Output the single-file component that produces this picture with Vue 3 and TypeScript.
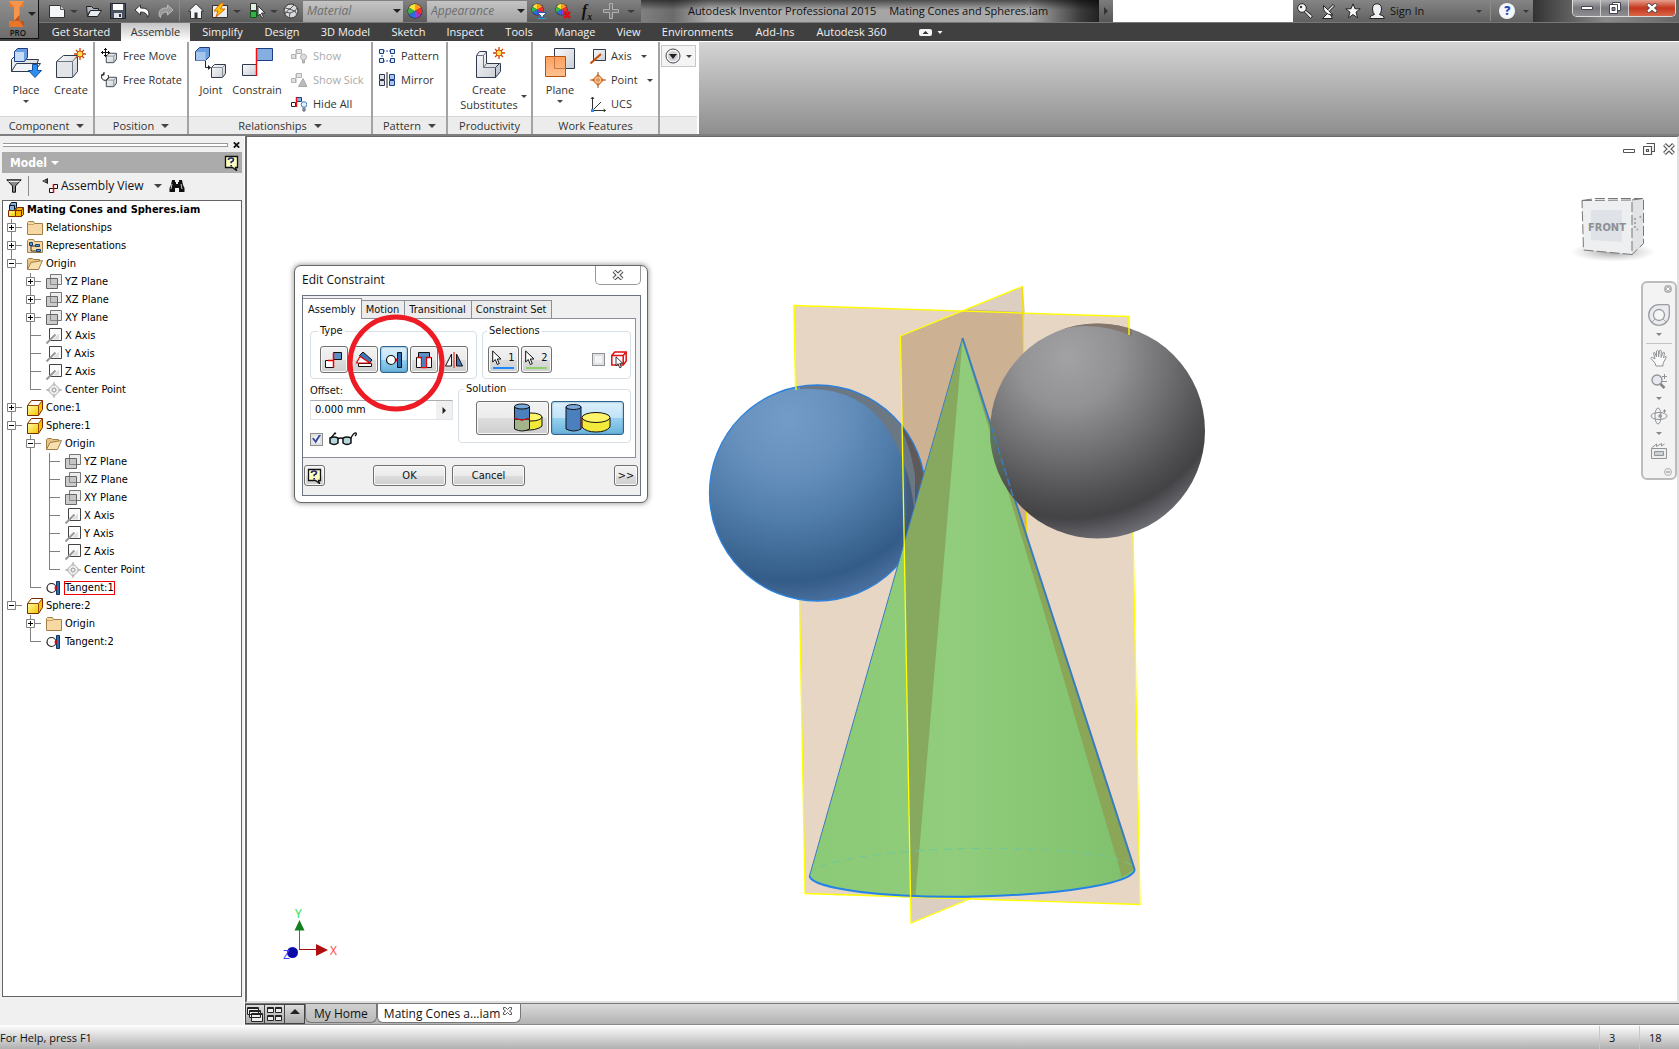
<script setup lang="ts">
import { ref } from 'vue'

type Guide = 'none' | 'line' | 'tee' | 'end'
type Box = 'plus' | 'minus' | ''

interface TreeRow {
  label: string
  icon: string
  guides: Guide[]
  box?: Box
  root?: boolean
  flagged?: boolean
}

interface RibbonTab {
  label: string
  active?: boolean
}

const ribbonTabs: RibbonTab[] = [
  { label: 'Get Started' },
  { label: 'Assemble', active: true },
  { label: 'Simplify' },
  { label: 'Design' },
  { label: '3D Model' },
  { label: 'Sketch' },
  { label: 'Inspect' },
  { label: 'Tools' },
  { label: 'Manage' },
  { label: 'View' },
  { label: 'Environments' },
  { label: 'Add-Ins' },
  { label: 'Autodesk 360' },
]

function originChildren(prefix: Guide[], planeBox: Box): TreeRow[] {
  const tee: Guide[] = [...prefix, 'tee']
  return [
    { label: 'YZ Plane', icon: 't-plane', guides: tee, box: planeBox },
    { label: 'XZ Plane', icon: 't-plane', guides: tee, box: planeBox },
    { label: 'XY Plane', icon: 't-plane', guides: tee, box: planeBox },
    { label: 'X Axis', icon: 't-axis', guides: tee },
    { label: 'Y Axis', icon: 't-axis', guides: tee },
    { label: 'Z Axis', icon: 't-axis', guides: tee },
    { label: 'Center Point', icon: 't-point', guides: [...prefix, 'end'] },
  ]
}

const treeRows: TreeRow[] = [
  { label: 'Mating Cones and Spheres.iam', icon: 't-assembly', guides: [], root: true },
  { label: 'Relationships', icon: 't-folder', guides: ['tee'], box: 'plus' },
  { label: 'Representations', icon: 't-reps', guides: ['tee'], box: 'plus' },
  { label: 'Origin', icon: 't-open', guides: ['tee'], box: 'minus' },
  ...originChildren(['line'], 'plus'),
  { label: 'Cone:1', icon: 't-part', guides: ['tee'], box: 'plus' },
  { label: 'Sphere:1', icon: 't-part', guides: ['tee'], box: 'minus' },
  { label: 'Origin', icon: 't-open', guides: ['line', 'tee'], box: 'minus' },
  ...originChildren(['line', 'line'], ''),
  { label: 'Tangent:1', icon: 't-tangent', guides: ['line', 'end'], flagged: true },
  { label: 'Sphere:2', icon: 't-part', guides: ['end'], box: 'minus' },
  { label: 'Origin', icon: 't-folder', guides: ['none', 'tee'], box: 'plus' },
  { label: 'Tangent:2', icon: 't-tangent', guides: ['none', 'end'] },
]

const constraintTypes = [
  { name: 'Mate', icon: 'd-mate' },
  { name: 'Angle', icon: 'd-angle' },
  { name: 'Tangent', icon: 'd-tangent' },
  { name: 'Insert', icon: 'd-insert' },
  { name: 'Symmetry', icon: 'd-sym' },
]
const activeType = ref('Tangent')
const dialogTabs = ['Assembly', 'Motion', 'Transitional', 'Constraint Set']
const activeDialogTab = ref('Assembly')
const offset = ref('0.000 mm')
const showPreview = ref(true)
const pickPartFirst = ref(false)
const solution = ref('outside')
const searchText = ref('')
</script>

<template>
  <div class="app">
    <svg class="sprite" aria-hidden="true">
      <defs>
        <linearGradient id="g-pale" x1="0" y1="0" x2="1" y2="1">
          <stop offset="0" stop-color="#fafafa" /><stop offset="1" stop-color="#c9cdd4" />
        </linearGradient>
        <linearGradient id="g-orange" x1="0" y1="0" x2="0" y2="1">
          <stop offset="0" stop-color="#ff9a55" /><stop offset="1" stop-color="#ffc08a" />
        </linearGradient>
        <linearGradient id="g-yellow" x1="0" y1="0" x2="1" y2="1">
          <stop offset="0" stop-color="#fff9a0" /><stop offset="1" stop-color="#f5c800" />
        </linearGradient>

        <symbol id="t-folder" viewBox="0 0 16 16">
          <path d="M.5 14.500V2.500l1-1h5l1 2h8v11z" fill="#f6d9a2" stroke="#a08048" />
          <path d="M1 4.500h6" stroke="#c9a265" />
        </symbol>
        <symbol id="t-reps" viewBox="0 0 16 16">
          <path d="M.5 14.500V2.500l1-1h5l1 2h8v11z" fill="#f6d9a2" stroke="#a08048" />
          <path d="M4 6v7h6M4 8h5" fill="none" stroke="#333" />
          <path d="M2.500 4.500h3v3h-3zM8.500 6.500h4v2h-4zM9.500 11.500h4v2h-4z" fill="#5b9be0" stroke="#1c3d6a" />
        </symbol>
        <symbol id="t-open" viewBox="0 0 16 16">
          <path d="M.5 13.500V3.500l1-1h4l1 1h6v3" fill="#e8c486" stroke="#a08048" />
          <path d="M.5 13.500L4 6.500l11.500-2-4 9z" fill="#f8dfae" stroke="#a08048" />
        </symbol>
        <symbol id="t-plane" viewBox="0 0 16 16">
          <path d="M4.500.5h11v10h-11z" fill="#ededed" stroke="#777" />
          <path d="M.5 4.500h11v10H.5z" fill="#b5b5b5" fill-opacity=".7" stroke="#666" />
          <path d="M4.500 5v5.500H11" fill="none" stroke="#888" />
        </symbol>
        <symbol id="t-axis" viewBox="0 0 16 16">
          <path d="M3.500.5h12v12h-12z" fill="#fbfbfb" stroke="#444" />
          <path d="M13 11.500H7l6-6z" fill="#dedede" />
          <path d="M.5 15.500l9-9" stroke="#999" stroke-width="2" />
        </symbol>
        <symbol id="t-point" viewBox="0 0 16 16">
          <path d="M8 1.500L14.500 8 8 14.500 1.500 8z" fill="#eee" stroke="#aaa" />
          <path d="M8 0v4M8 12v4M0 8h4M12 8h4" stroke="#aaa" />
          <circle cx="8" cy="8" r="2" fill="none" stroke="#999" />
        </symbol>
        <symbol id="t-part" viewBox="0 0 16 16">
          <path d="M.5 5.500l4-5h11v9l-4 6H.500z" fill="#f5c400" stroke="#7a2a00" stroke-linejoin="round" />
          <path d="M1.200 5.500L5 1h9.800l-3.500 4.500z" fill="#fff" />
          <path d="M1 6h10v9H1z" fill="url(#g-yellow)" />
          <path d="M.5 5.500h11v10m0-10l4-5" fill="none" stroke="#9a4a00" />
        </symbol>
        <symbol id="t-assembly" viewBox="0 0 16 16">
          <path d="M1.500 3.500l2-3h5v5l-2 3h-5z" fill="#7db2e8" stroke="#111" />
          <path d="M1.500 3.500h5v4" fill="none" stroke="#111" />
          <path d="M.5 8.500h7v6h-7z" fill="url(#g-yellow)" stroke="#7a2a00" />
          <path d="M7.500 8.500l2-3h6v7l-2 2h-6z" fill="#f5b400" stroke="#7a2a00" />
          <path d="M7.500 8.500h6v6m0-6l2-3" fill="none" stroke="#7a2a00" />
        </symbol>
        <symbol id="t-tangent" viewBox="0 0 16 16">
          <circle cx="5.500" cy="8" r="4.500" fill="#fff" stroke="#222" stroke-width="1.200" />
          <path d="M10.500 1.500h3v13h-3z" fill="#2f6faf" stroke="#12345c" />
          <path d="M8.500 8h2M10 6v4" stroke="#e00" stroke-width="1.500" />
        </symbol>

        <symbol id="r-cube" viewBox="0 0 16 16">
          <path d="M3.500 6.500l3-3h8v6l-3 4h-8z" fill="url(#g-pale)" stroke="#3a4250" />
          <path d="M3.500 6.500h8v7m0-7l3-3" fill="none" stroke="#8a909a" />
        </symbol>
        <symbol id="d-mate" viewBox="0 0 18 18">
          <path d="M8.500 1.500h8v7h-8z" fill="#5b8fc6" stroke="#111" />
          <path d="M.5 9.500h8v7h-8z" fill="#fff" stroke="#111" />
          <path d="M8.500 2v15M8 9.500H3" stroke="#e00" stroke-width="1.500" />
        </symbol>
        <symbol id="d-angle" viewBox="0 0 18 18">
          <path d="M4.500 4.500L8 1l9 8-3 3.500z" fill="#3f76b5" stroke="#111" />
          <path d="M3.500 12.500h13v3h-13z" fill="#fff" stroke="#111" />
          <path d="M5 5.500L1.500 12H15z" fill="#fff" stroke="#e00" stroke-width="1.200" />
        </symbol>
        <symbol id="d-tangent" viewBox="0 0 18 18">
          <circle cx="6" cy="9" r="4.500" fill="#fff" stroke="#111" stroke-width="1.200" />
          <path d="M12.500 1.500h4v15h-4z" fill="#2f6faf" stroke="#111" />
          <path d="M10 9l2.500-2.500v5z" fill="#e00" />
        </symbol>
        <symbol id="d-insert" viewBox="0 0 18 18">
          <path d="M1.500 6.500h15v10h-15z" fill="#fff" stroke="#111" />
          <path d="M6.500 7v9.500h5V7" fill="#3f76b5" stroke="#e00" stroke-width="1.300" />
          <path d="M3.500 1.500h11v5h-11z" fill="#5b8fc6" stroke="#111" />
          <path d="M7 5h4v11H7z" fill="#4a80bd" />
          <path d="M2 6.500h4.500M11.500 6.500H16" stroke="#e00" stroke-width="1.300" />
        </symbol>
        <symbol id="d-sym" viewBox="0 0 18 18">
          <path d="M6.500 3v12h-6z" fill="#fff" stroke="#111" />
          <path d="M11.500 3v12h6z" fill="#3f76b5" stroke="#111" />
          <path d="M9 1v16" stroke="#e00" />
        </symbol>
        <symbol id="cursor" viewBox="0 0 10 16">
          <path d="M.7 1v11l2.600-2.500 2 5 2-.9-2-4.600H9z" fill="#fff" stroke="#111" />
        </symbol>
        <symbol id="help-note" viewBox="0 0 16 16">
          <path d="M1.500 1.500h12v11h-2l1 3-4-3h-7z" fill="#ffffc0" stroke="#111" stroke-width="1.300" />
          <path d="M4.500 5q0-2 2.500-2t2.500 1.800Q9.500 6.200 7.200 7v1.200M7.200 10v1.500" fill="none" stroke="#1b2a6b" stroke-width="1.700" />
        </symbol>
        <symbol id="wheel" viewBox="0 0 16 16">
          <circle cx="8" cy="8" r="7.500" fill="#223" />
          <path d="M8 8V1a7 7 0 0 1 6.060 3.500z" fill="#ff9a1f" />
          <path d="M8 8l6.060-3.500a7 7 0 0 1 0 7z" fill="#e8342c" />
          <path d="M8 8l6.060 3.500A7 7 0 0 1 8 15z" fill="#a03ad0" />
          <path d="M8 8v7a7 7 0 0 1-6.060-3.500z" fill="#2f6ae0" />
          <path d="M8 8l-6.060 3.500a7 7 0 0 1 0-7z" fill="#35b648" />
          <path d="M8 8L1.940 4.500A7 7 0 0 1 8 1z" fill="#f8e43a" />
        </symbol>
        <symbol id="spark" viewBox="0 0 12 12">
          <path d="M6 0v12M0 6h12M2 2l8 8M10 2l-8 8" stroke="#d4440c" stroke-width="1.300" />
          <circle cx="6" cy="6" r="3" fill="#ffe14a" stroke="#d4440c" />
        </symbol>
      </defs>
    </svg>

    <header class="chrome">
      <button class="app-button" aria-label="Application menu">
        <svg width="18" height="26" viewBox="0 0 18 26">
          <path d="M1 0h15v6h-4.500v14H16v6H1v-6h5V6H1z" fill="#e8772a" />
          <path d="M1 0h15l-4.500 6H6zM6 6v14l5.500-6V6z" fill="#f7964a" />
          <path d="M1 26l5-6 5.500-6v6H16v6z" fill="#c2561a" />
          <path d="M1 26h15l-4.500-6H6z" fill="#e8772a" />
        </svg>
        <i class="caret wide"></i>
        <span>PRO</span>
      </button>

      <div class="chrome-main">
        <div class="title-row">
          <div class="qat">
            <button class="q" aria-label="New"><svg viewBox="0 0 16 16"><path d="M.5 2.500h11l4 4v8H.500z" fill="#f4f5f7" stroke="#333" /><path d="M11.500 2.500v4h4" fill="#ccd" stroke="#555" /></svg></button>
            <i class="caret dark"></i>
            <button class="q" aria-label="Open"><svg viewBox="0 0 16 16"><path d="M.5 3.500h5l2 2h5v2l-9 1-2 5z" fill="#aeb6c2" stroke="#222" /><path d="M1.500 13.500l3-6h11l-4 6z" fill="#e8ebf0" stroke="#222" /></svg></button>
            <button class="q" aria-label="Save"><svg viewBox="0 0 16 16"><path d="M.5.5h15v15H.500z" fill="#4a5262" stroke="#1c222c" /><path d="M3 1h10v6H3z" fill="#fff" /><path d="M4 10h8v5H4z" fill="#dfe3ea" /><path d="M9 11h2v3H9z" fill="#333" /></svg></button>
            <button class="q" aria-label="Undo"><svg viewBox="0 0 16 16"><path d="M1 7l5.500-5v3Q15 4.500 15 11q0 2-1.500 3.500Q13.500 9 6.500 9v3z" fill="#fff" stroke="#333" /></svg></button>
            <button class="q" aria-label="Redo"><svg viewBox="0 0 16 16"><path d="M15 7L9.500 2v3Q1 4.500 1 11q0 2 1.500 3.500Q2.500 9 9.500 9v3z" fill="#999" stroke="#bbb" /></svg></button>
            <i class="bar"></i>
            <button class="q" aria-label="Home"><svg viewBox="0 0 16 16"><path d="M.5 8L8 .8 15.500 8h-2v7.500h-11V8z" fill="#f4f5f7" stroke="#333" /><path d="M6.500 15.500v-6h3v6z" fill="#333" /></svg></button>
            <button class="q" aria-label="Update"><svg viewBox="0 0 16 16"><path d="M.5 2.500h15v12H.500z" fill="#e8ebf0" stroke="#333" /><path d="M9 0L2 8h4l-2 6 9-8H8.500L12 0z" fill="#ffc400" stroke="#d86a00" /></svg></button>
            <i class="caret dark"></i>
            <button class="q" aria-label="Select"><svg viewBox="0 0 16 16"><path d="M1.500.5h6v7h-6z" fill="#e0f0e0" stroke="#333" /><path d="M1.500 8.500h6v6h-6z" fill="#38b048" stroke="#0e5a1a" /><path d="M9 3v10l2-2 2 4 1.500-1-2-4H16z" fill="#fff" stroke="#333" /></svg></button>
            <i class="caret dark"></i>
            <button class="q ball" aria-label="Material browser"><svg viewBox="0 0 16 16"><circle cx="8" cy="8" r="7" fill="#d8dade" stroke="#333" /><path d="M2 5l5 1 4-4M2 11l4-5 6 2 2-3M6 15l1-5 5-2 2 4M7 10l-5-1" fill="none" stroke="#555" /></svg></button>
            <span class="combo">
              <select aria-label="Material"><option>Material</option></select><i class="caret"></i>
            </span>
            <button class="q" aria-label="Appearance browser"><svg viewBox="0 0 16 16"><use href="#wheel" /></svg></button>
            <span class="combo">
              <select aria-label="Appearance"><option>Appearance</option></select><i class="caret"></i>
            </span>
            <button class="q" aria-label="Adjust"><svg viewBox="0 0 16 16"><use href="#wheel" width="13" height="13" /><path d="M6.500 9.500h9L12 13v1.500h-2V13z" fill="#fff" stroke="#1b5fb0" /><path d="M7 15.500h8" stroke="#1b9be0" /></svg></button>
            <button class="q" aria-label="Clear"><svg viewBox="0 0 16 16"><use href="#wheel" width="13" height="13" /><path d="M9 9l6 6M15 9l-6 6" stroke="#e01010" stroke-width="2.500" /></svg></button>
            <button class="q fx" aria-label="Parameters"><i>f<sub>x</sub></i></button>
            <button class="q" aria-label="Add"><svg viewBox="0 0 16 16"><path d="M6.500.5h3v6h6v3h-6v6h-3v-6h-6v-3h6z" fill="#7a7a7a" stroke="#b0b0b0" /></svg></button>
            <i class="caret dark last-caret"></i>
          </div>

          <div class="window-title">
            <span>Autodesk Inventor Professional 2015</span>
            <span>Mating Cones and Spheres.iam</span>
          </div>

          <div class="search">
            <button aria-label="Search options"><svg width="6" height="8" viewBox="0 0 6 8"><path d="M1 0l4 4-4 4z" fill="#333" /></svg></button>
            <input v-model="searchText" aria-label="Search" />
          </div>

          <div class="info">
            <button class="q" aria-label="Search help"><svg viewBox="0 0 16 16"><path d="M9 7.500l6.500 5.500-2 2.500-6-6.500" fill="#e8eaee" stroke="#222" /><circle cx="5" cy="5" r="4.300" fill="#f6f7f9" stroke="#222" /><circle cx="4" cy="4" r="1.200" fill="#333" /></svg></button>
            <button class="q" aria-label="Subscription"><svg viewBox="0 0 16 16"><path d="M7 10l-5.500 5.500h10L9 11" fill="#f6f7f9" stroke="#222" /><path d="M2.500 2.500q-1 9 9.500 9.500z" fill="#f6f7f9" stroke="#222" /><path d="M8 7l5-5" stroke="#222" stroke-width="3" /><path d="M7.500 7.500l5-5" stroke="#eee" stroke-width="1.300" /></svg></button>
            <button class="q" aria-label="Favorites"><svg viewBox="0 0 16 16"><path d="M8 .8l2 5h5.200l-4.200 3.400 1.600 5.600L8 11.600l-4.600 3.200L5 9.200.8 5.800H6z" fill="#f6f7f9" stroke="#222" /></svg></button>
            <button class="q" aria-label="Account"><svg viewBox="0 0 16 16"><path d="M.5 15.500q0-3 5-4-2-2-2-5.500Q3.500.8 8 .8T12.500 6q0 3.500-2 5.500 5 1 5 4z" fill="#f0f1f4" stroke="#222" /></svg></button>
            <button class="sign-in">Sign In</button>
            <i class="caret dark"></i>
            <i class="bar"></i>
            <button class="help-round" aria-label="Help">?</button>
            <i class="caret dark"></i>
          </div>

          <div class="glass">
            <div class="win-buttons">
              <button aria-label="Minimize"><svg width="12" height="4" viewBox="0 0 12 4"><path d="M.5.5h11v3H.500z" fill="#fff" stroke="#445" /></svg></button>
              <button aria-label="Restore"><svg width="12" height="12" viewBox="0 0 12 12"><path d="M3.500.5h8v8h-8z" fill="#fff" stroke="#445" /><path d="M.5 2.500h8v9h-8z" fill="#fff" stroke="#445" /><path d="M3 5.500h3v3H3z" fill="#889" stroke="#445" /></svg></button>
              <button class="close" aria-label="Close"><svg width="12" height="10" viewBox="0 0 12 10"><path d="M1.500 1l9 8M10.500 1l-9 8" stroke="#445" stroke-width="4" /><path d="M2 1.500l8 7M10 1.500l-8 7" stroke="#fff" stroke-width="2.400" /></svg></button>
            </div>
          </div>
        </div>

        <nav class="menu" aria-label="Ribbon tabs">
          <button v-for="tab in ribbonTabs" :key="tab.label" :class="{ active: tab.active }">{{ tab.label }}</button>
          <button class="fold" aria-label="Minimize ribbon"><svg width="24" height="7" viewBox="0 0 24 7"><rect width="13" height="7" rx="2" fill="#f4f4f4" /><path d="M3.500 5l3-3 3 3z" fill="#333" /><path d="M18.500 2h5L21 5z" fill="#f4f4f4" /></svg></button>
        </nav>
      </div>
    </header>

    <section class="ribbon">
      <div class="panel component">
        <div class="panel-body">
          <button class="big">
            <svg viewBox="0 0 32 32"><path d="M1.500 12.500l4-4h9l2 4h12l-4 12h-23z" fill="url(#g-pale)" stroke="#2f3a4c" /><path d="M1.500 24.500l5-8h24l-6 8z" fill="#f2f3f6" stroke="#2f3a4c" /><path d="M4.500 4.500l3-3h10v9l-3 4h-10z" fill="#6d9fe0" stroke="#1c3f86" /><path d="M5 5h9v9H5z" fill="#c4dcf6" /><path d="M22.500 17.500h5v6h4l-6.500 7-6.500-7h4z" fill="#2e8df0" stroke="#1450a0" /></svg>
            <span>Place</span><i class="caret"></i>
          </button>
          <button class="big">
            <svg viewBox="0 0 32 32"><path d="M1.500 14.500l7-6h14v16l-5 6h-16z" fill="url(#g-pale)" stroke="#2f3a4c" /><path d="M2 15h15.500v15H2z" fill="#e2e4e8" /><path d="M1.500 14.500h16v16m0-16l5-6" fill="none" stroke="#6b7484" /><use href="#spark" x="19" y="1" width="12" height="12" /></svg>
            <span>Create</span>
          </button>
        </div>
        <footer>Component <i class="caret wide"></i></footer>
      </div>

      <div class="panel position">
        <div class="panel-body">
          <div class="stack">
            <button><svg viewBox="0 0 16 16"><use href="#r-cube" x="2" y="2" width="15" height="15" /><path d="M4.500 0v9M0 4.500h9M3 1.500h3M3 7.500h3M1.500 3v3M7.500 3v3" stroke="#111" /></svg>Free Move</button>
            <button><svg viewBox="0 0 16 16"><use href="#r-cube" x="2" y="2" width="15" height="15" /><path d="M3 1.500A3.500 3.500 0 1 0 7 3M3 0v3h-3" fill="none" stroke="#111" /></svg>Free Rotate</button>
          </div>
        </div>
        <footer>Position <i class="caret wide"></i></footer>
      </div>

      <div class="panel relations">
        <div class="panel-body">
          <button class="big">
            <svg viewBox="0 0 32 32"><path d="M.5 4.500l4-4h10v9l-4 4H.500z" fill="#6d9fe0" stroke="#1c3f86" /><path d="M1 5h9.500v8.500H1z" fill="#a6c6ee" /><path d="M16.500 20.500l3-3h11v9l-3 4h-11z" fill="url(#g-pale)" stroke="#2f3a4c" /><path d="M16.500 20.500h11v10m0-10l3-3" fill="none" stroke="#8a909a" /><path d="M10.500 14v6.500h5" fill="none" stroke="#222" /><path d="M13 18l3 2.500-3 2.500z" fill="#222" /></svg>
            <span>Joint</span>
          </button>
          <button class="big wide">
            <svg viewBox="0 0 32 32"><path d="M15.500 1.500h16v12h-16z" fill="#84aee0" stroke="#1c3f86" /><path d="M1.500 17.500h14v11h-14z" fill="url(#g-pale)" stroke="#2f3a4c" /><path d="M15.500 1v28" stroke="#f01010" stroke-width="1.500" /></svg>
            <span>Constrain</span>
          </button>
          <div class="stack">
            <button class="off"><svg viewBox="0 0 16 16"><path d="M5.500 1.500h5v4h-5zM.500 6.500h4v4h-4zM5 2v9" fill="#e2e2e2" stroke="#b2b2b2" /><circle cx="12.500" cy="9" r="3" fill="#ddd" stroke="#b2b2b2" /><path d="M11.500 12v3h2v-3" fill="#bbb" stroke="#aaa" /></svg>Show</button>
            <button class="off"><svg viewBox="0 0 16 16"><path d="M5.500 1.500h5v4h-5zM.500 6.500h4v4h-4zM5 2v9" fill="#e2e2e2" stroke="#b2b2b2" /><path d="M12 6.500l4 8H7.500z" fill="#bbb" stroke="#aaa" /></svg>Show Sick</button>
            <button><svg viewBox="0 0 16 16"><path d="M5.500 1.500h5v4h-5z" fill="#84aee0" stroke="#1c3f86" /><path d="M.5 6.500h4v4h-4z" fill="#fff" stroke="#222" /><path d="M5.500 1v10" stroke="#f01010" stroke-width="1.500" /><circle cx="13" cy="8.500" r="2.800" fill="#dff0ff" stroke="#3a7ac0" /><path d="M12 11.500v3.500h2v-3.500" fill="#9ab" stroke="#567" /></svg>Hide All</button>
          </div>
        </div>
        <footer>Relationships <i class="caret wide"></i></footer>
      </div>

      <div class="panel pattern">
        <div class="panel-body">
          <div class="stack">
            <button><svg viewBox="0 0 16 16"><path d="M4 3h8M4 13h8M3 4v8M13 4v8" stroke="#2a57a5" stroke-dasharray="2 1" /><path d="M.5 1.500h4v4h-4zM11.500 1.500h4v4h-4zM.500 10.500h4v4h-4zM11.500 10.500h4v4h-4z" fill="#dce9f8" stroke="#1c3f86" /></svg>Pattern</button>
            <button><svg viewBox="0 0 16 16"><path d="M.5 2.500h5v5h-5zM.500 8.500h5v5h-5z" fill="#dfe2e8" stroke="#2f3a4c" /><path d="M10.500 2.500h5v5h-5zM10.500 8.500h5v5h-5z" fill="#a6c6ee" stroke="#1c3f86" /><path d="M8 0v16" stroke="#222" /></svg>Mirror</button>
          </div>
        </div>
        <footer>Pattern <i class="caret wide"></i></footer>
      </div>

      <div class="panel productivity">
        <div class="panel-body">
          <button class="big two">
            <svg viewBox="0 0 32 32"><path d="M3.500 8.500l3-4h7v12h13l-4 4v10h-19z" fill="url(#g-pale)" stroke="#2f3a4c" /><path d="M22.500 30.500l5-6v-8h-1l-4 4z" fill="#c4c8d0" stroke="#2f3a4c" /><path d="M3.500 8.500h7v12h12m-12 0l3-4m-3-8l3-4" fill="none" stroke="#6b7484" /><use href="#spark" x="20" y="0" width="12" height="12" /></svg>
            <span>Create<br />Substitutes</span><i class="caret"></i>
          </button>
        </div>
        <footer>Productivity</footer>
      </div>

      <div class="panel work">
        <div class="panel-body">
          <button class="big">
            <svg viewBox="0 0 32 32"><path d="M10.500 1.500h20v20h-20z" fill="url(#g-pale)" stroke="#2f3a4c" /><path d="M1.500 9.500h20v20h-20z" fill="url(#g-orange)" fill-opacity=".95" stroke="#b8500c" /><path d="M10.500 9.500v12h11" fill="none" stroke="#c07a4c" /></svg>
            <span>Plane</span><i class="caret"></i>
          </button>
          <div class="stack">
            <button><svg viewBox="0 0 16 16"><path d="M3.500 1.500h12v11h-12z" fill="url(#g-pale)" stroke="#2f3a4c" /><path d="M.5 15.500L11 6" stroke="#c0500c" stroke-width="2" /></svg>Axis<i class="caret"></i></button>
            <button><svg viewBox="0 0 16 16"><path d="M8 2.500L13.500 8 8 13.500 2.500 8z" fill="#ffc08a" stroke="#b8500c" /><path d="M8 0v5M8 11v5M0 8h5M11 8h5" stroke="#b8500c" /><path d="M8 6.500L9.500 8 8 9.500 6.500 8z" fill="#fff" stroke="#b8500c" /></svg>Point<i class="caret"></i></button>
            <button><svg viewBox="0 0 16 16"><path d="M2.500 14V1.500M2 14.500h13.500M1 3l1.500-2L4 3M13.500 13l2 1.500-2 1.500M3 14l8-8" fill="none" stroke="#333" /><path d="M1 13h3v3H1z" fill="#2e8df0" /></svg>UCS</button>
          </div>
        </div>
        <footer>Work Features</footer>
      </div>

      <div class="panel last">
        <div class="panel-body">
          <button class="drop" aria-label="Panels">
            <svg width="16" height="16" viewBox="0 0 16 16"><circle cx="8" cy="8" r="7" fill="#fff" stroke="#444" /><circle cx="8" cy="8" r="5.300" fill="#cfd3d8" /><path d="M4 6h8l-4 5z" fill="#222" /></svg>
            <i class="caret"></i>
          </button>
        </div>
        <footer></footer>
      </div>
    </section>

    <div class="workspace">
      <aside class="browser">
        <div class="grip"><i></i><button aria-label="Close panel"><svg width="7" height="6" viewBox="0 0 7 6"><path d="M.8.3l5.400 5.400M6.200.3L.8 5.700" stroke="#111" stroke-width="1.700" /></svg></button></div>
        <div class="browser-title">
          <strong>Model</strong><i class="caret wide"></i>
          <button aria-label="Browser help"><svg width="16" height="16"><use href="#help-note" /></svg></button>
        </div>
        <div class="browser-tools">
          <button aria-label="Filter"><svg width="16" height="14" viewBox="0 0 16 14"><path d="M.8.8h14.400L9.500 7v6.200h-3V7z" fill="#8a8a8a" stroke="#111" /><path d="M2.500 2.500h11" stroke="#eee" /></svg></button>
          <i class="bar"></i>
          <svg width="16" height="16" viewBox="0 0 16 16"><path d="M0 3l6-3v6z" fill="#222" /><path d="M2 3h3" stroke="#999" /><path d="M7.500 10.500h4v4h-4zM11.500 6.500h4v4h-4z" fill="#fff" stroke="#111" /><path d="M11.500 6v9" stroke="#e00" stroke-width="1.500" /></svg>
          <button class="view-pick">Assembly View</button><i class="caret wide"></i>
          <button aria-label="Find"><svg width="16" height="14" viewBox="0 0 16 14"><path d="M3 1h3v2h1v2h2V3h1V1h3l1 5 1.500 3v4H10V9H6v4H.500V9L2 6z" fill="#111" /><path d="M3 5L2 10M12 5l1 5" stroke="#ccc" /></svg></button>
        </div>
        <div class="tree" role="tree">
          <div v-for="(row, i) in treeRows" :key="i" class="row" :class="{ root: row.root }" role="treeitem">
            <svg v-for="(g, k) in row.guides" :key="k" class="guide" width="19" height="18" viewBox="0 0 19 18">
              <path v-if="g === 'line' || g === 'tee'" d="M8.500 0v18" stroke="#808080" />
              <path v-if="g === 'end'" d="M8.500 0v9" stroke="#808080" />
              <path v-if="g === 'tee' || g === 'end'" d="M8.500 8.500h11" stroke="#808080" />
              <g v-if="row.box && k === row.guides.length - 1">
                <path d="M4.500 4.500h8v8h-8z" fill="#fff" stroke="#808080" />
                <path :d="row.box === 'plus' ? 'M6 8.500h5M8.500 6v5' : 'M6 8.500h5'" stroke="#000" />
              </g>
            </svg>
            <svg class="node" width="16" height="16"><use :href="'#' + row.icon" /></svg>
            <span :class="{ flagged: row.flagged }">{{ row.label }}</span>
          </div>
        </div>
      </aside>

      <main class="stage">
        <div class="viewport">
          <div class="doc-buttons">
            <button aria-label="Minimize document"><svg width="12" height="12" viewBox="0 0 12 12"><path d="M.5 6.500h11v3H.500z" fill="#fff" stroke="#555" /></svg></button>
            <button aria-label="Restore document"><svg width="12" height="12" viewBox="0 0 12 12"><path d="M3.500.5h8v8h-3M.500 3.500h8v8h-8zM3.500 6.500h2v2h-2z" fill="none" stroke="#555" stroke-width="1.200" /></svg></button>
            <button aria-label="Close document"><svg width="12" height="12" viewBox="0 0 12 12"><path d="M1.500 1.500l9 9M10.500 1.500l-9 9" stroke="#555" stroke-width="4" /><path d="M1.800 1.800l8.400 8.400M10.200 1.800l-8.400 8.400" stroke="#fff" stroke-width="1.800" /></svg></button>
          </div>

          <svg class="scene" width="520" height="660" viewBox="700 275 520 660" role="img" aria-label="Cone with two tangent spheres">
            <defs>
              <radialGradient id="s-blue" cx=".36" cy=".12" r=".95" fx=".36" fy=".16">
                <stop offset="0" stop-color="#739cc8" /><stop offset=".25" stop-color="#6891be" />
                <stop offset=".5" stop-color="#527eac" /><stop offset=".72" stop-color="#3d6793" />
                <stop offset=".82" stop-color="#345c88" /><stop offset=".95" stop-color="#4a709f" />
              </radialGradient>
              <radialGradient id="s-grey" cx=".36" cy=".12" r=".95" fx=".36" fy=".16">
                <stop offset="0" stop-color="#a2a2a5" /><stop offset=".25" stop-color="#929295" />
                <stop offset=".5" stop-color="#6f6f72" /><stop offset=".72" stop-color="#4f4f52" />
                <stop offset=".82" stop-color="#434346" /><stop offset=".97" stop-color="#74747c" />
              </radialGradient>
              <linearGradient id="s-cone" x1="0" x2="1">
                <stop offset="0" stop-color="#8bca76" /><stop offset=".45" stop-color="#91cd7c" />
                <stop offset="1" stop-color="#80c06c" />
              </linearGradient>
              <linearGradient id="s-through" x1="0" x2="1" y2=".3">
                <stop offset="0" stop-color="#5a8a50" stop-opacity=".75" /><stop offset="1" stop-color="#566050" stop-opacity="0" />
              </linearGradient>
              <clipPath id="c-blue"><circle cx="817.500" cy="493" r="108" /></clipPath>
              <clipPath id="c-grey"><circle cx="1097.500" cy="431" r="107.500" /></clipPath>
            </defs>
            <path d="M794 305.500L1129 316.500 1140 904.500 805 893.500z" fill="#e8d6c4" />
            <path d="M900.500 336L1022.500 286.500 1025 313 972 897.500 911 923z" fill="#dccfc2" />
            <path d="M900.500 336L968 309.500 1023 312 1030 720 972 898H911z" fill="#cdb193" />
            <path d="M794 305.500L1129 316.500 1140 904.500 805 893.500z" fill="none" stroke="#ff0" stroke-width="1.300" />
            <path d="M900.500 336L1022.500 286.500" fill="none" stroke="#ff0" stroke-width="1.300" />
            <path d="M1022.500 286.500L1027 545" fill="none" stroke="#f4de00" stroke-width="1.300" />

            <circle cx="817.500" cy="493" r="108" fill="url(#s-blue)" />
            <g clip-path="url(#c-blue)">
              <path d="M902 380h30v240l-24-80z" fill="#4a5468" fill-opacity=".55" />
              <path d="M800 389Q860 386 888 430 912 468 915 520V380H800z" fill="#6b7783" />
              <path d="M902 430Q920 470 918 530l14-40V400h-30z" fill="#60595a" />
              <path d="M905 560q-18 28-60 42l20 4 40-30z" fill="#68737f" />
            </g>
            <circle cx="817.500" cy="493" r="108" fill="none" stroke="#2c82dc" stroke-width="1.300" />
            <path d="M794 305.500L796 390" stroke="#ff0" stroke-width="1.300" />

            <path d="M962.500 338L809.500 876A162.500 24 -1 0 0 1134.500 869z" fill="url(#s-cone)" />
            <path d="M962.500 340L904.500 542 910.500 895H915.500L938 630z" fill="#87a85f" />
            <path d="M966 352L1040.500 600 1122 877 1134.500 869z" fill="#8ba657" />
            <path d="M809.500 876A162.500 24 -1 0 1 1134.500 869" fill="none" stroke="#6fc79a" stroke-dasharray="8 6" />
            <path d="M962.500 338L809.500 876" stroke="#3a7cc0" />
            <path d="M962.500 338L1134.500 869" stroke="#3a7cc0" stroke-width="2" />
            <path d="M809.500 876A162.500 24 -1 0 0 1134.500 869" fill="none" stroke="#2583e8" stroke-width="2" />
            <path d="M900.500 336L911 923 972 898" fill="none" stroke="#ff0" stroke-width="1.300" />

            <circle cx="1097.500" cy="431" r="107.500" fill="url(#s-grey)" />
            <g clip-path="url(#c-grey)">
              <path d="M985 400L1018 510 1000 520z" fill="url(#s-through)" />
              <path d="M1010 365Q1045 326 1086 326 1110 326 1132 336V315H1000z" fill="#83766c" />
            </g>
            <path d="M991 426L1013 496" stroke="#3a7cc0" stroke-width="1.500" stroke-dasharray="8 3" />
            <path d="M1129 316.500V335" stroke="#ff0" stroke-width="1.300" />
          </svg>

          <svg class="cube" width="88" height="72" viewBox="1570 192 88 72" role="img" aria-label="View cube, front">
            <defs><radialGradient id="s-shadow"><stop offset="0" stop-color="#777" stop-opacity=".7" /><stop offset="1" stop-color="#aaa" stop-opacity="0" /></radialGradient></defs>
            <ellipse cx="1613" cy="252" rx="43" ry="10" fill="url(#s-shadow)" />
            <path d="M1582 200.500L1632 200V254.500L1583.500 250z" fill="#eeeff0" />
            <path d="M1632 200L1643.500 198.500V243.500L1632 254.500z" fill="#e2e3e5" />
            <path d="M1591 210h31v32l-31-2z" fill="#dfe3e7" />
            <path d="M1582 200.500L1632 200V254.500L1583.500 250zM1632 200L1643.500 198.500V243.500L1632 254.500M1582 200.500L1596 198.500H1643" fill="none" stroke="#777" stroke-dasharray="10 3" />
            <path d="M1635 218v10l3 2M1640 216l2 4" fill="none" stroke="#a5a8ac" stroke-dasharray="2 2" stroke-width="2" />
            <text x="1607" y="231" text-anchor="middle" class="cube-text">FRONT</text>
          </svg>

          <div class="navbar">
            <button class="end" aria-label="Close navigation bar"><svg width="8" height="8" viewBox="0 0 8 8"><circle cx="4" cy="4" r="4" fill="#b5b5b5" /><path d="M2.500 2.500l3 3M5.500 2.500l-3 3" stroke="#fff" /></svg></button>
            <button class="steer" aria-label="Steering wheel"><svg width="22" height="22" viewBox="0 0 22 22"><path d="M11 .7h8.300q2 0 2 2V11A10.300 10.300 0 1 1 11 .7z" fill="#e9ebee" stroke="#9a9da2" stroke-width="1.300" /><path d="M4 18l3.500-3.500M18 18l-3.500-3.500" stroke="#a5a8ac" /><circle cx="11" cy="11" r="5.500" fill="#f6f6f6" stroke="#9a9da2" stroke-width="1.300" /></svg></button>
            <i class="caret"></i>
            <hr />
            <button aria-label="Pan"><svg width="18" height="18" viewBox="0 0 18 18"><path d="M5 14L1 9.500q0-1.500 1.500-1L5 10 3.500 4Q4 2.500 5 4l1.500 4V2Q7.500.500 8.500 2v6l1-6.500Q10.500.500 11.300 2L11 8.500 13 3.500q1.300-.8 1.500.5L13.500 9l1.500-1.500q1.500-.5 1.200 1L13 14.500v2.500H6z" fill="#fafafa" stroke="#909398" /></svg></button>
            <button aria-label="Zoom"><svg width="18" height="18" viewBox="0 0 18 18"><circle cx="7" cy="8" r="5" fill="#e6eaee" stroke="#909398" stroke-width="1.300" /><path d="M10.500 12l4 4" stroke="#808388" stroke-width="2.500" /><path d="M12 4.500h5M14.500 2v5M12 9.500h5" stroke="#909398" /></svg></button>
            <i class="caret"></i>
            <button aria-label="Orbit"><svg width="18" height="18" viewBox="0 0 18 18"><ellipse cx="9" cy="9" rx="8" ry="3.500" fill="none" stroke="#909398" /><ellipse cx="8" cy="9" rx="3" ry="8" fill="none" stroke="#909398" /><path d="M8 9h4M10 7v4M13 4h3M14.500 2.500v3" stroke="#808388" /></svg></button>
            <i class="caret"></i>
            <button aria-label="Show motion"><svg width="18" height="18" viewBox="0 0 18 18"><path d="M1.500 6.500h15v10h-15z" fill="#eee" stroke="#909398" /><path d="M4.500 9.500h9v4h-9z" fill="#ccd0d5" stroke="#909398" /><path d="M1.500 6l5-4v2.500l5-3v2.500l3-2" fill="none" stroke="#909398" /></svg></button>
            <button class="end last-end" aria-label="Navigation bar options"><svg width="8" height="8" viewBox="0 0 8 8"><circle cx="4" cy="4" r="3.500" fill="#eee" stroke="#b0b0b0" /><path d="M2 4h4" stroke="#888" /></svg></button>
          </div>

          <svg class="triad" width="70" height="66" viewBox="275 900 70 66" role="img" aria-label="Axis triad">
            <path d="M299.500 930v20" stroke="#0a9a1a" /><path d="M299 949.500h17" stroke="#a01010" />
            <path d="M299.500 920l5 10.500h-10z" fill="#12801e" /><path d="M316 944v12l12-6z" fill="#b00e0e" />
            <circle cx="292.500" cy="952.500" r="5.500" fill="#0a0aa8" />
            <text x="295" y="918" fill="#22e03a">Y</text><text x="330" y="955" fill="#f44">X</text><text x="283" y="959" fill="#44f">Z</text>
          </svg>

          <section class="dialog" role="dialog" aria-labelledby="dlg-title">
            <div class="dlg-head">
              <h2 id="dlg-title">Edit Constraint</h2>
              <button aria-label="Close dialog"><svg width="12" height="10" viewBox="0 0 12 10"><path d="M2 1l8 8M10 1L2 9" stroke="#555" stroke-width="4" /><path d="M2.300 1.300l7.400 7.400M9.700 1.300L2.300 8.700" stroke="#fff" stroke-width="1.900" /></svg></button>
            </div>
            <div class="dlg-body">
              <div class="dlg-tabs" role="tablist">
                <button v-for="t in dialogTabs" :key="t" role="tab" :class="{ on: t === activeDialogTab }" @click="activeDialogTab = t">{{ t }}</button>
              </div>
              <div class="dlg-page">
                <div class="dlg-line">
                  <fieldset class="type">
                    <legend>Type</legend>
                    <div class="picks">
                      <button v-for="c in constraintTypes" :key="c.name" class="w7" :class="{ on: c.name === activeType }" :aria-label="c.name" @click="activeType = c.name">
                        <svg width="18" height="18"><use :href="'#' + c.icon" /></svg>
                      </button>
                    </div>
                  </fieldset>
                  <fieldset class="selections">
                    <legend>Selections</legend>
                    <div class="picks">
                      <button class="w7 sel blue"><svg width="10" height="16"><use href="#cursor" /></svg>1</button>
                      <button class="w7 sel green"><svg width="10" height="16"><use href="#cursor" /></svg>2</button>
                      <label class="pick-first">
                        <input v-model="pickPartFirst" type="checkbox" aria-label="Pick part first" />
                        <svg width="16" height="18" viewBox="0 0 16 18"><path d="M.8 4.500l3-3.500h11.400v9l-3 4H.800zM.800 4.500h11.400V14m0-9.500L15.200 1" fill="none" stroke="#e01010" stroke-width="1.500" /><use href="#cursor" x="4" y="5" width="9" height="13" /></svg>
                      </label>
                    </div>
                  </fieldset>
                </div>
                <div class="dlg-line lower">
                  <div class="offset">
                    <label for="offset">Offset:</label>
                    <div class="offset-box"><input id="offset" v-model="offset" /><button aria-label="More offset values"><svg width="5" height="7" viewBox="0 0 5 7"><path d="M.5 0L4 3.500.500 7z" fill="#222" /></svg></button></div>
                    <label class="preview">
                      <input v-model="showPreview" type="checkbox" aria-label="Show preview" />
                      <svg width="28" height="14" viewBox="0 0 28 14"><path d="M1 6q4-2 8 0v5q-4 3-8 0zM14 6q4-2 8 0v5q-4 3-8 0z" fill="#b6d8dc" stroke="#111" stroke-width="1.500" /><path d="M9 7q2.500-2 5 0M2 6L6 1l1 1M22 6q3-6 5-5 1 1-1 3" fill="none" stroke="#111" stroke-width="1.300" /></svg>
                    </label>
                  </div>
                  <fieldset class="solution">
                    <legend>Solution</legend>
                    <div class="picks">
                      <button class="w7 sol" :class="{ on: solution === 'inside' }" aria-label="Inside" @click="solution = 'inside'">
                        <svg width="46" height="30" viewBox="0 0 46 30"><path d="M20 14h22v9q-5 5-20 4z" fill="#f2ea3a" stroke="#111" /><ellipse cx="31" cy="14" rx="11" ry="4" fill="#fff56a" stroke="#111" /><path d="M14.500 16h15v10q-7 4-15 0z" fill="#a3b48a" stroke="#111" /><path d="M14.500 3.500h15v12q-7 3-15 0z" fill="#4a80bd" stroke="#111" /><ellipse cx="22" cy="3.500" rx="7.500" ry="2.500" fill="#7aa8dc" stroke="#111" /><path d="M14.500 15.500q7 3 15 0" fill="none" stroke="#e00" /></svg>
                      </button>
                      <button class="w7 sol" :class="{ on: solution === 'outside' }" aria-label="Outside" @click="solution = 'outside'">
                        <svg width="46" height="30" viewBox="0 0 46 30"><path d="M1 4h15v22q-7 4-15 0z" fill="#4a80bd" stroke="#111" /><ellipse cx="8.500" cy="4" rx="7.500" ry="2.500" fill="#7aa8dc" stroke="#111" /><path d="M17 15h28v9q-4 5-14 5t-14-5z" fill="#f2ea3a" stroke="#111" /><ellipse cx="31" cy="14.500" rx="14" ry="5" fill="#fff56a" stroke="#111" /><path d="M16.500 14v11" stroke="#e00" stroke-width="1.300" /></svg>
                      </button>
                    </div>
                  </fieldset>
                </div>
              </div>
              <div class="dlg-foot">
                <button class="w7 help" aria-label="Dialog help"><svg width="16" height="16"><use href="#help-note" /></svg></button>
                <button class="w7 ok">OK</button>
                <button class="w7 cancel">Cancel</button>
                <button class="w7 more">&gt;&gt;</button>
              </div>
            </div>
            <svg class="marker" width="98" height="98" viewBox="0 0 98 98" aria-hidden="true"><circle cx="49" cy="49" r="46" fill="none" stroke="#ed1c24" stroke-width="5" /></svg>
          </section>
        </div>

        <div class="doc-tabs">
          <button class="tile" aria-label="Cascade"><svg width="16" height="15" viewBox="0 0 16 15"><path d="M.5.5h11v7H.500zM2.500 3.500h11v7h-11zM4.500 6.500h11v8h-11z" fill="#eee" stroke="#222" /><path d="M1 1.500h10M3 4.500h10M5 7.500h10" stroke="#222" /></svg></button>
          <button class="tile" aria-label="Arrange"><svg width="15" height="14" viewBox="0 0 15 14"><path d="M.5.500h6v5h-6zM8.500.500h6v5h-6zM.500 8.500h6v5h-6zM8.500 8.500h6v5h-6z" fill="#eee" stroke="#222" /><path d="M1 1.500h5M9 1.500h5M1 9.500h5M9 9.500h5" stroke="#222" /></svg></button>
          <button class="tile up" aria-label="Document list"><svg width="10" height="5" viewBox="0 0 10 5"><path d="M0 5l5-5 5 5z" fill="#222" /></svg></button>
          <button class="doc">My Home</button>
          <button class="doc current">Mating Cones a...iam <svg width="9" height="8" viewBox="0 0 9 8"><path d="M.5.500h2l2 2 2-2h2v2l-2 1.500 2 1.500v2h-2l-2-2-2 2h-2v-2l2-1.500-2-1.500z" fill="#fff" stroke="#555" /></svg></button>
        </div>
      </main>
    </div>

    <footer class="status">
      <span class="hint">For Help, press F1</span>
      <span class="cell">3</span>
      <span class="cell">18</span>
    </footer>
  </div>
</template>

<style>
body {
  margin: 0;
}
</style>

<style scoped>
.app {
  display: flex;
  flex-direction: column;
  height: 100vh;
  min-width: 1280px;
  overflow: hidden;
  font-family: 'Open Sans', 'Noto Sans', sans-serif;
  font-size: 11px;
  line-height: 16px;
  color: #111;
  background: #f0f0f0;
}
.sprite {
  position: absolute;
  width: 0;
  height: 0;
}
svg {
  display: block;
  flex: none;
}
button {
  margin: 0;
  padding: 0;
  border: 0;
  background: none;
  color: inherit;
  font: inherit;
  white-space: nowrap;
}
i.caret {
  flex: none;
  width: 0;
  height: 0;
  border: 3px solid transparent;
  border-top-color: #444;
  border-bottom: 0;
}
i.caret.wide {
  border-width: 4px 4px 0;
}
i.bar {
  flex: none;
  width: 1px;
  height: 20px;
  background: #8b8b8b;
}

/* title bar */
.chrome {
  display: flex;
  height: 41px;
  background: #404040;
  border-bottom: 1px solid #fff;
  flex: none;
}
.app-button {
  display: grid;
  grid-template-columns: 26px 12px;
  grid-template-rows: 28px 10px;
  align-items: center;
  justify-items: end;
  width: 39px;
  height: 39px;
  background: linear-gradient(#8f8f8f, #6d6d6d);
  border-right: 1px solid #111;
  border-bottom: 1px solid #111;
  box-sizing: border-box;
}
.app-button .caret {
  justify-self: center;
  border-top-color: #222;
}
.app-button span {
  justify-self: end;
  font-size: 8px;
  font-weight: 600;
  line-height: 10px;
}
.chrome-main {
  flex: 1;
  min-width: 0;
}
.title-row {
  display: flex;
  height: 22px;
  border-bottom: 1px solid #777;
  background: linear-gradient(#7d7d7d, #565656);
}
.qat {
  display: flex;
  align-items: center;
  gap: 8px;
  padding: 0 6px 0 10px;
  background: linear-gradient(#828282, #5b5b5b);
}
.q {
  width: 16px;
  height: 16px;
  flex: none;
}
.q svg {
  width: 16px;
  height: 16px;
}
.q.ball {
  margin-left: -3px;
}
.qat > .caret {
  border-width: 3px 4px 0;
  margin-left: -3px;
}
.qat > .caret.dark,
.info > .caret.dark {
  border-top-color: #3a3a3a;
}
.qat > .caret.last-caret {
  margin-left: 0;
}
.qat > .bar {
  margin-left: -3px;
}
.fx {
  font: bold 16px/16px 'Liberation Serif', serif;
}
.fx sub {
  font-size: 10px;
  line-height: 0;
}
.combo {
  display: flex;
  align-items: center;
  width: 100px;
  height: 21px;
  margin: 0 -4px;
  background: linear-gradient(#c4c4c4, #a3a3a3);
  box-sizing: border-box;
  padding-right: 2px;
}
.combo select {
  flex: 1;
  min-width: 0;
  padding: 0 0 0 4px;
  border: 0;
  appearance: none;
  background: none;
  color: #6e6e6e;
  font: italic 12px/20px 'Open Sans', sans-serif;
}
.combo .caret {
  border-width: 4px 4px 0;
  border-top-color: #222;
}
.window-title {
  display: flex;
  flex: 1;
  align-items: center;
  justify-content: center;
  gap: 13px;
  min-width: 0;
  padding-right: 4px;
  white-space: nowrap;
  background: linear-gradient(rgba(0, 0, 0, 0.55), rgba(0, 0, 0, 0) 45%), linear-gradient(90deg, #808080, #6a6a6a 7%, #b0b0b0 15%, #a4a4a4 50%, #acacac 85%, #3a3a3a 96%, #222);
}
.search {
  display: flex;
  width: 194px;
}
.search button {
  display: flex;
  align-items: center;
  justify-content: center;
  width: 14px;
}
.search input {
  flex: 1;
  min-width: 0;
  border: 0;
  padding: 0 4px;
  background: #fff;
}
.info {
  display: flex;
  align-items: center;
  gap: 8px;
  width: 240px;
  box-sizing: border-box;
  padding-left: 4px;
  background: linear-gradient(#858585, #616161);
}
.sign-in {
  margin: 0 44px 0 -3px;
}
.help-round {
  width: 16px;
  height: 16px;
  border-radius: 8px;
  background: #f4f6fa;
  color: #1a50b8;
  font-weight: 800;
  font-size: 12px;
  line-height: 16px;
}
.glass {
  display: flex;
  justify-content: flex-end;
  width: 146px;
  padding-right: 3px;
  box-sizing: border-box;
  background: linear-gradient(90deg, #333, #8a8a8a 50%, #666);
}
.win-buttons {
  display: flex;
  height: 17px;
  border: 1px solid #ddd;
  border-top: 0;
  border-radius: 0 0 5px 5px;
  box-sizing: border-box;
  overflow: hidden;
}
.win-buttons button {
  display: flex;
  align-items: center;
  justify-content: center;
  width: 28px;
  border-right: 1px solid #ccc;
  background: linear-gradient(#b5b5b8, #77777c 50%, #8e8e93);
}
.win-buttons .close {
  width: 46px;
  border: 0;
  background: linear-gradient(#e6a08e, #c4351c 50%, #d9674a);
}

/* ribbon tab strip */
.menu {
  display: grid;
  grid-template-columns: 80px 69px 65px 54px 73px 53px 60px 48px 64px 43px 95px 60px 93px auto;
  justify-content: start;
  height: 18px;
  padding-left: 2px;
  color: #f2f2f2;
}
.menu button {
  line-height: 16px;
}
.menu .active {
  background: linear-gradient(#c2c2c2, #fff);
  color: #333;
}
.menu .fold {
  display: flex;
  align-items: center;
  padding-left: 21px;
}

/* ribbon */
.ribbon {
  display: flex;
  height: 94px;
  flex: none;
  background: linear-gradient(#d4d4d4, #8e8e8e);
  border-bottom: 2px solid #7f7f7f;
  box-sizing: border-box;
  color: #333;
}
.panel {
  display: flex;
  flex-direction: column;
  box-sizing: border-box;
  border-right: 2px solid #a3a3a3;
  background: #fff;
}
.panel footer {
  display: flex;
  align-items: center;
  justify-content: center;
  gap: 7px;
  height: 17px;
  background: #ececec;
  border-top: 1px solid #d5d5d5;
  flex: none;
}
.panel-body {
  display: flex;
  flex: 1;
  min-height: 0;
}
.component {
  width: 95px;
}
.component .panel-body {
  padding-left: 2px;
}
.position {
  width: 94px;
}
.relations {
  width: 184px;
}
.relations .panel-body {
  padding-left: 1px;
}
.pattern {
  width: 75px;
}
.productivity {
  width: 85px;
}
.work {
  width: 127px;
}
.last {
  width: 39px;
  border-right-color: #fff;
}
.big {
  display: flex;
  flex-direction: column;
  align-items: center;
  padding-top: 5px;
  width: 44px;
}
.component .big {
  width: 48px;
}
.component .big + .big {
  width: 42px;
}
.big svg {
  width: 32px;
  height: 32px;
}
.big span {
  margin-top: 3px;
  line-height: 15px;
}
.big .caret {
  margin-top: 3px;
}
.big.wide {
  width: 50px;
}
.relations .big:first-child {
  width: 42px;
}
.big.two {
  position: relative;
  width: 82px;
}
.big.two .caret {
  position: absolute;
  right: 3px;
  bottom: 18px;
}
.work .big {
  width: 54px;
}
.stack {
  display: flex;
  flex-direction: column;
  padding-top: 2px;
}
.stack button {
  display: flex;
  align-items: center;
  gap: 6px;
  height: 24px;
  padding-left: 6px;
}
.relations .stack button {
  padding-left: 9px;
}
.work .stack button {
  gap: 5px;
  padding-left: 3px;
}
.stack svg {
  width: 16px;
  height: 16px;
}
.stack .caret {
  margin-left: 4px;
}
.off {
  color: #aaa;
}
.drop {
  display: flex;
  align-items: center;
  justify-content: center;
  gap: 5px;
  width: 35px;
  height: 22px;
  margin: 3px 0 0 1px;
  border: 1px solid #c8c8c8;
  background: #f4f4f4;
  box-sizing: border-box;
}

/* work area */
.workspace {
  display: flex;
  flex: 1;
  min-height: 0;
}
.browser {
  display: flex;
  flex-direction: column;
  width: 245px;
  flex: none;
  box-sizing: border-box;
  padding: 4px 2px 28px;
  background: #f0f0f0;
  border-right: 1px solid #fff;
  font-family: 'DejaVu Sans Condensed', 'DejaVu Sans', sans-serif;
}
.grip {
  display: flex;
  align-items: center;
  gap: 5px;
  height: 12px;
  padding: 0 2px 3px 1px;
  box-sizing: border-box;
}
.grip i {
  flex: 1;
  height: 2px;
  border: 1px solid #999;
  border-left: 0;
  background: #fff;
}
.browser-title {
  display: flex;
  align-items: center;
  gap: 4px;
  height: 21px;
  padding: 0 2px 0 8px;
  background: #ababab;
  color: #fff;
}
.browser-title strong {
  font-size: 12px;
}
.browser-title .caret {
  border-top-color: #fff;
}
.browser-title button {
  margin-left: auto;
}
.browser-tools {
  display: flex;
  align-items: center;
  height: 27px;
  padding: 0 0 2px 4px;
  box-sizing: border-box;
  font: 12px/16px 'Open Sans', sans-serif;
}
.browser-tools .bar {
  margin: 0 13px 0 6px;
}
.view-pick {
  margin: 0 10px 0 3px;
}
.browser-tools .caret {
  margin-right: 7px;
}
.tree {
  flex: 1;
  min-height: 0;
  border: 1px solid #646464;
  background: #fff;
  color: #000;
}
.row {
  display: flex;
  align-items: center;
  height: 18px;
  white-space: nowrap;
}
.node {
  margin: 0 3px 0 5px;
}
.row.root {
  font-weight: bold;
}
.flagged {
  outline: 1px solid #e00;
  line-height: 12px;
}
.stage {
  display: flex;
  flex: 1;
  flex-direction: column;
  min-width: 0;
}
.viewport {
  position: relative;
  flex: 1;
  min-height: 0;
  background: #fff;
  border: solid #e0e0e0;
  border-width: 1px 2px 2px;
  border-left-color: #6a6a6a;
  border-top-color: #6a6a6a;
  overflow: hidden;
}
.doc-buttons {
  position: absolute;
  top: 6px;
  right: 2px;
  display: flex;
  gap: 8px;
}
.scene {
  position: absolute;
  left: 453px;
  top: 138px;
}
.cube {
  position: absolute;
  top: 55px;
  right: 19px;
}
.cube-text {
  font: bold 11px 'DejaVu Sans Condensed', sans-serif;
  fill: #8c8f94;
}
.triad {
  position: absolute;
  left: 28px;
  bottom: 35px;
  font: 12px 'Open Sans', sans-serif;
}
.navbar {
  position: absolute;
  top: 144px;
  right: 0;
  display: flex;
  flex-direction: column;
  align-items: center;
  width: 36px;
  padding: 2px 0;
  gap: 5px;
  border: 2px solid #bcbcbc;
  border-radius: 6px;
  box-sizing: border-box;
  background: #f3f3f3;
}
.navbar .end {
  align-self: flex-end;
  margin-right: 3px;
}
.navbar .steer {
  margin-top: 6px;
}
.navbar .last-end {
  margin-top: 3px;
}
.navbar .caret {
  border-top-color: #888;
  margin: 2px 0;
}
.navbar hr {
  width: 26px;
  height: 1px;
  margin: 0;
  border: 0;
  background: #c4c4c4;
}

/* constraint dialog */
.dialog {
  position: absolute;
  left: 47px;
  top: 128px;
  width: 354px;
  padding: 0 6px 6px 7px;
  box-sizing: border-box;
  border: 1px solid #666;
  border-radius: 7px;
  background: #fff;
  box-shadow: 0 0 5px 1px rgba(0, 0, 0, 0.35);
  font-family: 'DejaVu Sans Condensed', 'DejaVu Sans', sans-serif;
}
.dlg-head {
  display: flex;
  align-items: flex-start;
  justify-content: space-between;
  height: 29px;
}
.dlg-head h2 {
  margin: 0;
  font: 12px/28px 'Open Sans', sans-serif;
}
.dlg-head button {
  display: flex;
  align-items: center;
  justify-content: center;
  width: 46px;
  height: 19px;
  border: 1px solid #999;
  border-top: 0;
  border-radius: 0 0 5px 5px;
}
.dlg-body {
  padding: 2px 4px 8px 0;
  border: 1px solid #6d7280;
  background: #f0f0f0;
}
.dlg-tabs {
  display: flex;
  align-items: flex-end;
  height: 20px;
}
.dlg-tabs button {
  height: 18px;
  padding: 0 5px 0 4px;
  border: 1px solid #8b8f99;
  border-left: 0;
  border-bottom: 0;
  background: #ececec;
  line-height: 17px;
}
.dlg-tabs .on {
  position: relative;
  height: 21px;
  margin-bottom: -1px;
  padding: 0 5px;
  background: #fff;
}
.dlg-page {
  height: 140px;
  padding: 4px 4px 0 7px;
  border: 1px solid #8b8f99;
  border-left: 0;
  box-sizing: border-box;
  background: #fff;
}
.dlg-line {
  display: flex;
  justify-content: space-between;
}
fieldset {
  min-width: 0;
  margin: 0;
  padding: 0 8px;
  border: 1px solid #d5dfe5;
  border-radius: 4px;
  box-sizing: border-box;
}
legend {
  padding: 0 2px;
  line-height: 16px;
}
.type {
  width: 167px;
  height: 56px;
  padding-left: 7px;
}
.selections {
  width: 149px;
  height: 56px;
  padding: 0 3px 0 4px;
}
.picks {
  display: flex;
  align-items: center;
  gap: 2px;
  padding: 7px 0 0 2px;
}
.w7 {
  display: flex;
  align-items: center;
  justify-content: center;
  border: 1px solid #707070;
  border-radius: 3px;
  box-shadow: inset 0 0 0 1px #f8f8f8;
  background: linear-gradient(#f2f2f2, #ebebeb 50%, #dddddd 50%, #cfcfcf);
  box-sizing: border-box;
}
.w7.on {
  border-color: #2c628b;
  box-shadow: inset 0 0 2px #5a8cae;
  background: linear-gradient(#dcf0fb, #c0e3f8 50%, #98d1ef 50%, #68b3db);
}
.type .w7 {
  width: 28px;
  height: 27px;
}
.sel {
  position: relative;
  gap: 6px;
  width: 31px;
  height: 27px;
  padding-bottom: 4px;
}
.sel::after {
  content: '';
  position: absolute;
  inset: auto 4px 3px;
  height: 2px;
  background: #1e88ff;
}
.sel.green::after {
  background: #8fd06e;
}
.selections .picks {
  padding-left: 1px;
}
.pick-first,
.preview {
  display: flex;
  align-items: center;
  gap: 6px;
}
.pick-first {
  margin-left: auto;
}
input[type='checkbox'] {
  width: 13px;
  height: 13px;
  margin: 0;
  appearance: none;
  border: 1px solid #8e8f8f;
  background: #f4f4f4;
  box-shadow: inset 0 0 0 2px #dfe1e6;
}
.preview input::before {
  content: '';
  display: block;
  width: 9px;
  height: 9px;
  margin: 1px;
  background: #3a4fa0;
  clip-path: polygon(0 45%, 20% 35%, 38% 62%, 80% 0, 100% 5%, 42% 100%);
  visibility: hidden;
}
.preview input:checked::before {
  visibility: visible;
}
.lower {
  margin-top: 1px;
}
.offset {
  width: 143px;
  padding-top: 3px;
}
.offset-box {
  display: flex;
  height: 20px;
  margin: 1px 0 12px;
  border: 1px solid #e2e3ea;
  border-top-color: #abadb3;
  box-sizing: border-box;
}
.offset-box input {
  flex: 1;
  min-width: 0;
  padding: 0 0 0 4px;
  border: 0;
  background: none;
  font: inherit;
}
.offset-box button {
  display: flex;
  align-items: center;
  justify-content: center;
  width: 16px;
  background: #f0f0f0;
}
.solution {
  width: 173px;
  height: 62px;
  margin-top: 1px;
  padding: 0 5px;
}
.solution .picks {
  padding: 4px 0 0 12px;
}
.sol {
  width: 73px;
  height: 34px;
}
.sol:first-child {
  justify-content: flex-end;
  padding-right: 2px;
}
.dlg-foot {
  display: flex;
  padding: 7px 0 1px 1px;
}
.dlg-foot .w7 {
  height: 21px;
}
.dlg-foot .help {
  width: 21px;
}
.ok,
.cancel {
  width: 73px;
}
.ok {
  margin: 0 6px 0 48px;
}
.more {
  width: 24px;
  margin-left: auto;
}
.dlg-foot .more {
  margin-right: -2px;
}
.marker {
  position: absolute;
  left: 52px;
  top: 48px;
  pointer-events: none;
}

/* document tabs and status */
.doc-tabs {
  display: flex;
  height: 22px;
  flex: none;
  box-sizing: border-box;
  background: linear-gradient(#dadada, #b2b2b2);
  border-top: 1px solid #777;
  border-bottom: 1px solid #8a8a8a;
}
.tile {
  display: flex;
  align-items: center;
  justify-content: center;
  width: 20px;
  border: 1px solid #444;
  border-left-width: 0;
  background: linear-gradient(#ddd, #aaa);
  box-sizing: border-box;
}
.tile:first-child {
  border-left-width: 1px;
}
.tile.up {
  padding-bottom: 6px;
}
.doc {
  display: flex;
  align-items: flex-start;
  gap: 3px;
  height: 19px;
  padding: 0 8px;
  border: 1px solid #777;
  border-top: 0;
  border-radius: 0 0 6px 6px;
  background: linear-gradient(#d0d0d0, #bbb);
  box-sizing: border-box;
  line-height: 19px;
  font-size: 12px;
}
.doc.current {
  padding-left: 6px;
  background: #fff;
}
.doc svg {
  margin-top: 3px;
}
.status {
  display: flex;
  height: 24px;
  flex: none;
  background: linear-gradient(#fff, #b0b0b0);
  line-height: 25px;
}
.hint {
  flex: 1;
}
.cell {
  width: 40px;
  padding-left: 9px;
  margin-top: 1px;
  box-sizing: border-box;
  border-left: 1px solid #c8c8c8;
  line-height: 24px;
}
</style>
